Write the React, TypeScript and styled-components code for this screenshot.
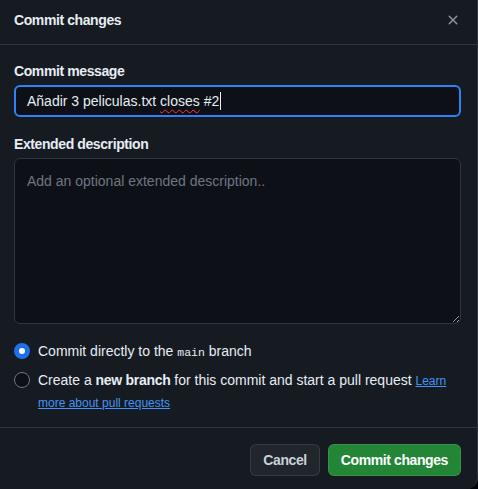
import React from "react";
import styled, { createGlobalStyle } from "styled-components";

const Global = createGlobalStyle`
  html, body { margin: 0; padding: 0; background: #010409; }
  body { font-family: "Liberation Sans", Arial, sans-serif; color: #e6edf3; }
  * { box-sizing: border-box; }
`;

const Dialog = styled.div`
  width: 478px;
  height: 489px;
  background: #161b22;
  border-right: 1px solid #30363d;
  border-bottom-right-radius: 12px;
  display: flex;
  flex-direction: column;
  overflow: hidden;
`;

const Header = styled.div`
  height: 45px;
  display: flex;
  align-items: center;
  justify-content: space-between;
  padding: 0 8px 0 14px;
  border-bottom: 1px solid #30363d;
`;

const Title = styled.h1`
  margin: 0;
  font-size: 14px;
  font-weight: 700;
  letter-spacing: -0.4px;
  line-height: 20px;
  margin-top: -4px;
`;

const CloseButton = styled.button`
  width: 32px;
  height: 32px;
  border: 0;
  background: transparent;
  color: #8b949e;
  display: flex;
  align-items: center;
  justify-content: center;
  padding: 0;
  margin-top: -5px;
`;

const Body = styled.div`
  padding: 16px 16px 0 14px;
  display: flex;
  flex-direction: column;
`;

const Label = styled.label`
  font-size: 14px;
  font-weight: 700;
  letter-spacing: -0.4px;
  line-height: 20px;
  margin-bottom: 4px;
`;

const InputBox = styled.div`
  height: 32px;
  border: 2px solid #2f81f7;
  border-radius: 6px;
  background: #0d1117;
  padding: 0 11px;
  display: flex;
  align-items: center;
  font-size: 14px;
  color: #e6edf3;
  margin-bottom: 17px;
`;

const Squiggle = styled.span`
  text-decoration: underline wavy #ff3333;
  text-decoration-thickness: 1px;
  text-underline-offset: 3px;
`;

const Caret = styled.span`
  display: inline-block;
  width: 1px;
  height: 18px;
  background: #e6edf3;
  vertical-align: middle;
  margin-left: 1px;
`;

const TextArea = styled.textarea`
  height: 166px;
  width: 100%;
  resize: vertical;
  border: 1px solid #30363d;
  border-radius: 6px;
  background: #0d1117;
  color: #e6edf3;
  font-family: inherit;
  font-size: 14px;
  line-height: 20px;
  padding: 12px 12px;
  outline: none;
  margin: 0 0 16px 0;
  display: block;
  &::placeholder { color: #6e7681; }
`;

const RadioGroup = styled.div`
  display: flex;
  flex-direction: column;
  gap: 7px;
`;

const RadioRow = styled.div`
  display: flex;
  align-items: flex-start;
  gap: 8px;
  font-size: 14px;
  line-height: 22px;
`;

const Radio = styled.span<{ $checked?: boolean }>`
  flex: none;
  width: 16px;
  height: 16px;
  border-radius: 50%;
  margin-top: 3px;
  background: ${(p) => (p.$checked ? "#ffffff" : "#0d1117")};
  border: ${(p) => (p.$checked ? "5px solid #1f6feb" : "1px solid #6e7681")};
`;

const Mono = styled.code`
  font-family: "Liberation Mono", "DejaVu Sans Mono", monospace;
  font-size: 11.5px;
  line-height: 16px;
`;

const Bold = styled.strong`
  font-weight: 700;
  letter-spacing: -0.3px;
`;

const Link = styled.a`
  color: #4493f8;
  text-decoration: underline;
  font-size: 12px;
  line-height: 16px;
`;

const Footer = styled.div`
  margin-top: auto;
  border-top: 1px solid #30363d;
  padding: 16px 16px 13px 14px;
  display: flex;
  justify-content: flex-end;
  gap: 8px;
`;

const Button = styled.button<{ $primary?: boolean }>`
  height: 32px;
  padding: 0 12px;
  border-radius: 6px;
  border: 1px solid rgba(240, 246, 252, 0.1);
  background: ${(p) => (p.$primary ? "#238636" : "#21262d")};
  color: ${(p) => (p.$primary ? "#ffffff" : "#c9d1d9")};
  font-family: inherit;
  font-size: 14px;
  font-weight: 700;
  letter-spacing: -0.4px;
  line-height: 20px;
`;

export default function App() {
  return (
    <>
      <Global />
      <Dialog>
        <Header>
          <Title>Commit changes</Title>
          <CloseButton aria-label="Close">
            <svg width="16" height="16" viewBox="0 0 16 16" fill="currentColor">
              <path d="M3.72 3.72a.75.75 0 0 1 1.06 0L8 6.94l3.22-3.22a.749.749 0 0 1 1.275.326.749.749 0 0 1-.215.734L9.06 8l3.22 3.22a.749.749 0 0 1-.326 1.275.749.749 0 0 1-.734-.215L8 9.06l-3.22 3.22a.751.751 0 0 1-1.042-.018.751.751 0 0 1-.018-1.042L6.94 8 3.72 4.78a.75.75 0 0 1 0-1.06Z" />
            </svg>
          </CloseButton>
        </Header>
        <Body>
          <Label>Commit message</Label>
          <InputBox>
            Añadir 3 peliculas.txt&nbsp;<Squiggle>closes</Squiggle>&nbsp;#2<Caret />
          </InputBox>
          <Label>Extended description</Label>
          <TextArea placeholder="Add an optional extended description.." />
          <RadioGroup>
            <RadioRow>
              <Radio $checked />
              <span>
                Commit directly to the <Mono>main</Mono> branch
              </span>
            </RadioRow>
            <RadioRow>
              <Radio />
              <span>
                Create a <Bold>new branch</Bold> for this commit and start a pull request{" "}
                <Link href="#">Learn more about pull requests</Link>
              </span>
            </RadioRow>
          </RadioGroup>
        </Body>
        <Footer>
          <Button>Cancel</Button>
          <Button $primary>Commit changes</Button>
        </Footer>
      </Dialog>
    </>
  );
}
